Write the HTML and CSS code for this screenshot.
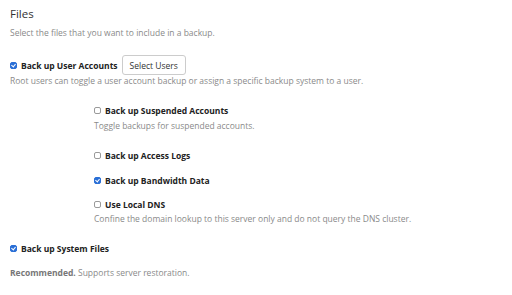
FILE: index.html
```html
<!DOCTYPE html>
<html>
<head>
<meta charset="utf-8">
<link rel="stylesheet" href="styles.css">
</head>
<body>
<div class="section">
  <h2 class="title">Files</h2>
  <p class="desc first">Select the files that you want to include in a backup.</p>

  <div class="row users">
    <span class="cb checked"></span>
    <span class="label">Back up User Accounts</span>
    <button class="btn">Select Users</button>
  </div>
  <p class="desc tight">Root users can toggle a user account backup or assign a specific backup system to a user.</p>

  <div class="nested">
    <div class="row r-susp">
      <span class="cb"></span>
      <span class="label">Back up Suspended Accounts</span>
    </div>
    <p class="desc d-susp">Toggle backups for suspended accounts.</p>

    <div class="row r-logs">
      <span class="cb"></span>
      <span class="label">Back up Access Logs</span>
    </div>

    <div class="row r-bw">
      <span class="cb checked"></span>
      <span class="label">Back up Bandwidth Data</span>
    </div>

    <div class="row r-dns">
      <span class="cb"></span>
      <span class="label">Use Local DNS</span>
    </div>
    <p class="desc d-dns">Confine the domain lookup to this server only and do not query the DNS cluster.</p>
  </div>

  <div class="row r-sys">
    <span class="cb checked"></span>
    <span class="label">Back up System Files</span>
  </div>
  <p class="desc d-rec"><strong>Recommended.</strong> Supports server restoration.</p>
</div>
</body>
</html>
```

FILE: styles.css
```css
html, body {
  margin: 0;
  padding: 0;
  background: #fff;
}
body {
  font-family: "Open Sans", "Noto Sans", sans-serif;
  font-size: 8.5px;
  color: #333;
}
.section {
  padding: 6px 10px 0 10px;
}
.title {
  margin: 0;
  font-size: 11.5px;
  line-height: 16px;
  font-weight: 400;
  color: #333;
}
.desc {
  margin: 0;
  line-height: 12px;
  color: #8a8a8a;
}
.desc.first { margin-top: 5px; }
.desc.tight { margin-top: 0; }
.row {
  display: flex;
  align-items: center;
  height: 12px;
}
.row.users {
  height: 20px;
  margin-top: 16px;
}
.label {
  font-weight: 700;
  color: #222;
  margin-left: 4px;
}
.cb {
  box-sizing: border-box;
  width: 7px;
  height: 7px;
  border: 1px solid #9a9a9a;
  border-radius: 2px;
  background: #fff;
  position: relative;
  flex: none;
}
.cb.checked {
  background: #2a6fd6;
  border-color: #2a6fd6;
}
.cb.checked::after {
  content: "";
  position: absolute;
  left: 1px;
  top: 0px;
  width: 2px;
  height: 3px;
  border-right: 1px solid #fff;
  border-bottom: 1px solid #fff;
  transform: rotate(40deg);
}
.btn {
  margin-left: 4px;
  height: 20px;
  padding: 0 7px;
  font-family: inherit;
  font-size: 8.5px;
  color: #333;
  background: #fff;
  border: 1px solid #ccc;
  border-radius: 3px;
}
.nested {
  margin-left: 84px;
}
.r-susp { margin-top: 17px; }
.d-susp { margin-top: 4px; }
.r-logs { margin-top: 17px; }
.r-bw { margin-top: 13px; }
.r-dns { margin-top: 12px; }
.d-dns { margin-top: 3px; }
.r-sys { margin-top: 17px; }
.d-rec { margin-top: 13px; }
.d-rec strong {
  color: #777;
  font-weight: 700;
}
```
